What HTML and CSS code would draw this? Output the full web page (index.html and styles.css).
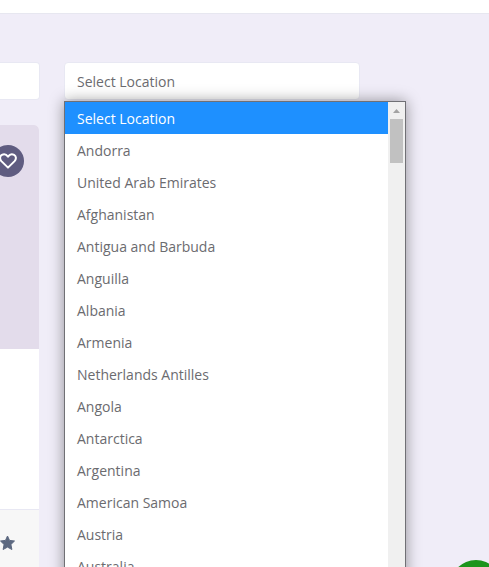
FILE: index.html
```html
<!DOCTYPE html>
<html lang="en">
<head>
<meta charset="utf-8">
<title>Listings</title>
<link rel="stylesheet" href="styles.css">
</head>
<body>
<header class="topbar"></header>
<main class="listing">
  <div class="column">
    <input class="field" type="text" aria-label="Keyword">
    <article class="card">
      <div class="card-media">
        <button class="favourite" type="button" aria-label="Add to favourites">
          <svg viewBox="0 0 18 16" width="18" height="16" fill="none" stroke="#fff" stroke-width="2" stroke-linejoin="round"><path d="M9 14.6 2.4 8.1C.4 6 .8 3 2.9 1.9 5 .8 7.4 1.4 9 3.6c1.6-2.2 4-2.800 6.100-1.700 2.100 1.100 2.500 4.100.5 6.200Z"/></svg>
        </button>
      </div>
      <div class="card-body"></div>
      <footer class="card-footer">
        <svg class="star" viewBox="0 0 16 16" width="16" height="16" fill="#5c6880" stroke="#5c6880" stroke-linejoin="round"><path d="M7.500 1l2 4.400 5 .6-3.600 3.500 1 5L7.500 12.100l-4.400 2.400 1-5L.5 6l5-.6Z"/></svg>
      </footer>
    </article>
  </div>
  <div class="location">
    <select class="field" aria-label="Location">
      <option>Select Location</option>
    </select>
    <div class="menu">
      <ul class="options" role="listbox" aria-label="Location">
        <li class="option selected" role="option" aria-selected="true">Select Location</li>
        <li class="option" role="option">Andorra</li>
        <li class="option" role="option">United Arab Emirates</li>
        <li class="option" role="option">Afghanistan</li>
        <li class="option" role="option">Antigua and Barbuda</li>
        <li class="option" role="option">Anguilla</li>
        <li class="option" role="option">Albania</li>
        <li class="option" role="option">Armenia</li>
        <li class="option" role="option">Netherlands Antilles</li>
        <li class="option" role="option">Angola</li>
        <li class="option" role="option">Antarctica</li>
        <li class="option" role="option">Argentina</li>
        <li class="option" role="option">American Samoa</li>
        <li class="option" role="option">Austria</li>
        <li class="option" role="option">Australia</li>
      </ul>
      <div class="scrollbar">
        <svg class="scroll-arrow" viewBox="0 0 17 17" width="17" height="17" fill="#a3a3a3"><path d="M5 11 8.500 7 12 11Z"/></svg>
        <div class="scroll-thumb"></div>
      </div>
    </div>
  </div>
</main>
<button class="chat" type="button" aria-label="Open chat"></button>
</body>
</html>
```
FILE: styles.css
```css
* {
  box-sizing: border-box;
}

body {
  margin: 0;
  height: 100vh;
  overflow: hidden;
  background: #f0edf8;
  color: #6b6b6f;
  font: 14px/34px "Open Sans", "Noto Sans", sans-serif;
}

.topbar {
  height: 14px;
  background: #fff;
  border-bottom: 1px solid #e7e7f0;
}

.listing {
  display: grid;
  grid-template-columns: 40px 1fr;
  gap: 24px;
  padding: 48px 129px 0 0;
}

.field {
  display: block;
  width: 100%;
  height: 38px;
  padding: 2px 12px 0;
  border: 1px solid #e8e8f3;
  border-radius: 4px;
  background: #fff;
  color: inherit;
  font: inherit;
  appearance: none;
  outline: none;
}

.column .field {
  border-left: 0;
  border-radius: 0 4px 4px 0;
}

.card {
  margin: 25px 1px 0 0;
  border-radius: 0 5px 0 0;
  overflow: hidden;
  background: #fff;
}

.card-media {
  height: 224px;
  padding-top: 20px;
  background: #e3dceb;
}

.favourite {
  display: grid;
  place-items: center;
  width: 32px;
  height: 32px;
  margin-left: -8px;
  padding: 0;
  border: 0;
  border-radius: 50%;
  background: #5f5c80;
}

.card-body {
  height: 160px;
}

.card-footer {
  height: 72px;
  padding-top: 25px;
  border-top: 1px solid #e8e8f3;
  background: #f7f7f7;
}

.star {
  display: block;
}

.location {
  position: relative;
}

.menu {
  position: absolute;
  top: 39px;
  left: 0;
  right: -46px;
  display: flex;
  border: 1px solid #707075;
  background: #fff;
  box-shadow: 0 0 14px rgba(0, 0, 0, 0.4);
}

.options {
  flex: 1;
  margin: 0;
  padding: 0;
  list-style: none;
}

.option {
  height: 32px;
  padding: 0 12px;
}

.selected {
  background: #1e90ff;
  color: #fff;
}

.scrollbar {
  width: 17px;
  background: #f0f0f0;
}

.scroll-arrow {
  display: block;
}

.scroll-thumb {
  height: 44px;
  margin: 0 2px;
  background: #c1c1c1;
}

.chat {
  position: fixed;
  right: -13px;
  bottom: -45px;
  width: 52px;
  height: 52px;
  border: 0;
  border-radius: 50%;
  background: #1c951c;
}
```
